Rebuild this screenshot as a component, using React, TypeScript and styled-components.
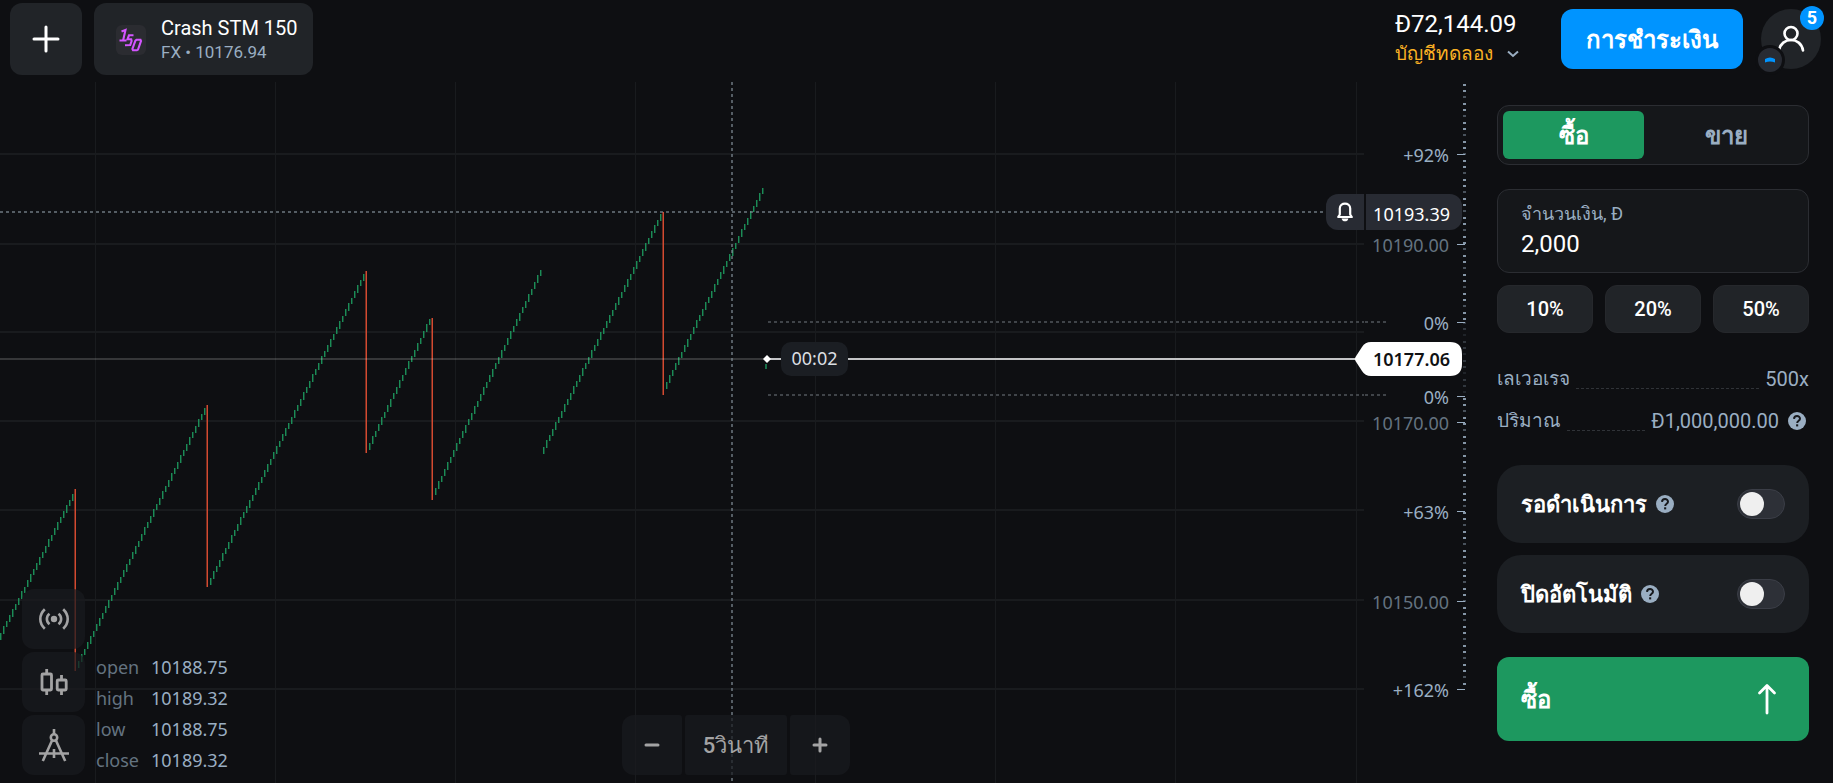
import React, { useState } from 'react';
import styled, { createGlobalStyle } from 'styled-components';

const color = {
  page: '#0e0f12',
  raised: '#212428',
  field: '#15171a',
  card: '#1c1f23',
  line: '#2b2d32',
  grid: '#191b1e',
  muted: '#9aaec2',
  dim: '#647380',
  blue: '#0094ff',
  green: '#1d985f',
  candleUp: '#1d9a5f',
  candleDown: '#d34a30',
  amber: '#fbb124',
};
const uiFont = `Roboto, 'Noto Sans', sans-serif`;
const chartFont = `'Noto Sans', sans-serif`;

const GlobalStyle = createGlobalStyle`
  *, *::before, *::after { box-sizing: border-box; }
  body { margin: 0; background: ${color.page}; color: #fff; font-family: ${uiFont}; }
  button, input { font: inherit; color: inherit; }
  button { border: 0; padding: 0; cursor: pointer; }
  svg { display: block; }
`;

const Page = styled.div`
  min-height: 100vh;
  display: flex;
  flex-direction: column;
  overflow: hidden;
`;

/* ---------- header ---------- */
const Header = styled.header`
  display: flex;
  justify-content: space-between;
  height: 82px;
  padding: 3px 12px 0 10px;
`;
const Tabs = styled.nav`
  display: flex;
  align-items: flex-start;
  gap: 12px;
`;
const AddButton = styled.button`
  display: grid;
  place-items: center;
  width: 72px;
  height: 72px;
  border-radius: 12px;
  background: ${color.raised};
`;
const AssetTab = styled.button`
  display: flex;
  align-items: center;
  gap: 15px;
  height: 72px;
  padding: 2px 15px 0 22px;
  border-radius: 12px;
  background: ${color.raised};
  text-align: left;
`;
const AssetName = styled.span`
  display: block;
  font-size: 20px;
  line-height: 24px;
`;
const AssetQuote = styled.span`
  display: block;
  font-size: 17px;
  line-height: 24px;
  color: ${color.muted};
`;
const Account = styled.div`
  display: flex;
  align-items: flex-start;
  padding-top: 6px;
`;
const BalanceButton = styled.button`
  margin-right: 42px;
  background: none;
  text-align: left;
`;
const Balance = styled.span`
  display: block;
  font-size: 24px;
  line-height: 30px;
`;
const AccountType = styled.span`
  display: flex;
  align-items: center;
  justify-content: space-between;
  gap: 14px;
  font-size: 19px;
  line-height: 30px;
  color: ${color.amber};
`;
const PayButton = styled.button`
  width: 182px;
  height: 60px;
  margin-right: 18px;
  border-radius: 12px;
  background: ${color.blue};
  font-size: 24px;
  font-weight: 700;
`;
const Avatar = styled.button`
  position: relative;
  display: grid;
  place-items: center;
  width: 60px;
  height: 60px;
  border-radius: 50%;
  background: ${color.raised};
`;
const Counter = styled.span`
  position: absolute;
  top: -3px;
  right: -3px;
  width: 24px;
  height: 24px;
  border-radius: 50%;
  background: ${color.blue};
  font-size: 18px;
  font-weight: 700;
  line-height: 24px;
  text-align: center;
`;
const Level = styled.span`
  position: absolute;
  left: -6px;
  bottom: -6px;
  display: grid;
  place-items: center;
  width: 30px;
  height: 30px;
  border: 3px solid ${color.page};
  border-radius: 50%;
  background: #282b33;
`;

/* ---------- chart ---------- */
const Main = styled.main`
  flex: 1;
  display: flex;
`;
const Chart = styled.section`
  position: relative;
  flex: 1;
  display: flex;
  min-width: 0;
  overflow: hidden;
  font-family: ${chartFont};
`;
const Plot = styled.svg`
  flex: 1;
  min-width: 0;
  height: auto;
`;
const Axis = styled.svg`
  width: 109px;
  height: auto;
  font-size: 18px;
`;
const AlertTag = styled.div`
  position: absolute;
  top: 112px;
  right: 11px;
  display: flex;
  gap: 2px;
  font-size: 18px;
  line-height: 36px;
`;
const AlertButton = styled.button`
  display: grid;
  place-items: center;
  width: 38px;
  height: 36px;
  border-radius: 12px 0 0 12px;
  background: #282b33;
`;
const AlertPrice = styled.span`
  width: 96px;
  height: 36px;
  padding-right: 12px;
  padding-top: 2px;
  border-radius: 0 12px 12px 0;
  background: #282b33;
  text-align: right;
`;
const PriceTag = styled.div`
  position: absolute;
  top: 260px;
  right: 11px;
  width: 108px;
  height: 34px;
  padding-right: 12px;
  font-size: 18px;
  font-weight: 600;
  line-height: 34px;
  color: #101114;
  text-align: right;
`;
const PriceShape = styled.svg`
  position: absolute;
  inset: 0;
  z-index: -1;
`;
const PriceTagLayer = styled.div`
  position: absolute;
  inset: 0;
  z-index: 0;
  pointer-events: none;
`;
const Timer = styled.span`
  position: absolute;
  top: 260px;
  left: 781px;
  width: 67px;
  height: 34px;
  border-radius: 10px;
  background: #1b1e23;
  color: #dcdfe2;
  font-size: 18px;
  line-height: 32px;
  text-align: center;
`;
const ChartFooter = styled.div`
  position: absolute;
  left: 22px;
  right: 23px;
  bottom: 8px;
  display: grid;
  grid-template-columns: 1fr auto 1fr;
  align-items: end;
  color: #a3a3a4;
`;
const ToolsArea = styled.div`
  display: flex;
  align-items: flex-end;
  gap: 11px;
`;
const Tools = styled.div`
  display: flex;
  flex-direction: column;
  gap: 3px;
`;
const ToolButton = styled.button`
  display: grid;
  place-items: center;
  width: 63px;
  height: 60px;
  border-radius: 12px;
  background: rgba(25, 27, 30, 0.72);
`;
const Ohlc = styled.dl`
  display: grid;
  grid-template-columns: 55px auto;
  grid-auto-rows: 30px;
  row-gap: 1px;
  margin: 0;
  font-size: 18px;
  line-height: 30px;
`;
const OhlcKey = styled.dt`
  color: ${color.dim};
`;
const OhlcValue = styled.dd`
  margin: 0;
  color: ${color.muted};
`;
const ZoomBar = styled.div`
  display: flex;
  gap: 3px;
  font-family: ${uiFont};
`;
const ZoomButton = styled.button<{ $side: 'left' | 'middle' | 'right' }>`
  display: grid;
  place-items: center;
  width: ${p => (p.$side === 'middle' ? '102px' : '60px')};
  height: 60px;
  border-radius: ${p =>
    p.$side === 'left' ? '12px 3px 3px 12px' : p.$side === 'right' ? '3px 12px 12px 3px' : '3px'};
  background: rgba(25, 27, 30, 0.72);
  font-size: 22px;
  font-weight: 500;
`;

/* ---------- order panel ---------- */
const Panel = styled.form`
  width: 360px;
  padding: 23px 24px 40px;
  display: flex;
  flex-direction: column;
`;
const SideSwitch = styled.div`
  display: grid;
  grid-template-columns: 141px 1fr;
  gap: 6px;
  height: 60px;
  padding: 5px;
  border: 1px solid ${color.line};
  border-radius: 12px;
  background: ${color.field};
`;
const SideButton = styled.button<{ $active: boolean }>`
  border-radius: 6px;
  background: ${p => (p.$active ? color.green : 'transparent')};
  color: ${p => (p.$active ? '#fff' : color.muted)};
  font-size: 24px;
  font-weight: 700;
`;
const Amount = styled.label`
  display: flex;
  flex-direction: column;
  height: 84px;
  margin-top: 24px;
  padding: 10px 23px;
  border: 1px solid ${color.line};
  border-radius: 12px;
  background: ${color.field};
  font-size: 18px;
  line-height: 28px;
  color: ${color.muted};
`;
const AmountInput = styled.input`
  width: 100%;
  height: 32px;
  padding: 0;
  border: 0;
  outline: 0;
  background: none;
  color: #fff;
  font-size: 24px;
  line-height: 32px;
`;
const Chips = styled.div`
  display: grid;
  grid-template-columns: repeat(3, 1fr);
  gap: 12px;
  margin-top: 12px;
`;
const Chip = styled.button`
  height: 48px;
  border: 1px solid #26282c;
  border-radius: 12px;
  background: ${color.raised};
  font-size: 20px;
  font-weight: 500;
`;
const Facts = styled.dl`
  display: flex;
  flex-direction: column;
  gap: 12px;
  margin: 31px 0 0;
  font-size: 19px;
  line-height: 30px;
  color: ${color.muted};
`;
const Fact = styled.div`
  display: flex;
  align-items: center;
`;
const FactName = styled.dt``;
const FactValue = styled.dd`
  display: flex;
  align-items: center;
  gap: 9px;
  margin: 0;
  font-size: 20px;
`;
const Leader = styled.span`
  flex: 1;
  height: 20px;
  margin: 0 6px;
  border-bottom: 1px dashed #303338;
`;
const Cards = styled.div`
  display: flex;
  flex-direction: column;
  gap: 12px;
  margin-top: 29px;
`;
const OptionCard = styled.div`
  display: flex;
  align-items: center;
  gap: 9px;
  height: 78px;
  padding: 0 24px;
  border-radius: 24px;
  background: ${color.card};
  font-size: 22px;
  font-weight: 600;
`;
const HelpButton = styled.button`
  display: block;
  background: none;
`;
const FactHelp = styled(HelpButton)`
  margin-right: 3px;
`;
const Switch = styled.input`
  appearance: none;
  position: relative;
  width: 48px;
  height: 30px;
  margin: 0 0 0 auto;
  border: 1px solid #3b3e47;
  border-radius: 15px;
  background: #2d3037;
  cursor: pointer;
  &::before {
    content: '';
    position: absolute;
    top: 2px;
    left: 2px;
    width: 24px;
    height: 24px;
    border-radius: 50%;
    background: #efefef;
  }
  &:checked { background: ${color.green}; }
  &:checked::before { left: 20px; }
`;
const Submit = styled.button<{ $sell: boolean }>`
  display: flex;
  align-items: center;
  justify-content: space-between;
  height: 84px;
  margin-top: 24px;
  padding: 0 32px 0 24px;
  border-radius: 12px;
  background: ${p => (p.$sell ? color.candleDown : color.green)};
  font-size: 24px;
  font-weight: 700;
`;

/* ---------- icons ---------- */
const AssetIcon = () => (
  <svg width="30" height="30" viewBox="0 0 30 30" fill="none" stroke="#d355ff" strokeWidth="2.100" aria-hidden="true">
    <rect width="30" height="30" rx="6" fill="#2b2c31" stroke="none" />
    <path d="M5.500 6.500 9.500 5 7.200 15M3.500 15.500H10.500" />
    <path d="M17.500 10.300H13L11.500 14.300H15.200L15.600 16 14.200 20 9 20.300" />
    <path d="M20.500 14.800H24.500L25 16 22 24.600 20.800 25.300H17L16.400 24 19.400 15.600Z" />
  </svg>
);
const HelpIcon = () => (
  <svg width="18" height="18" viewBox="0 0 18 18" aria-hidden="true">
    <circle cx="9" cy="9" r="9" fill={color.muted} />
    <path d="M6 6.900C6.100 3.100 12 3.100 12 6.700 12 8.700 9.200 8.700 9.200 10.900" fill="none" stroke="#17191d" strokeWidth="2" />
    <rect x="8.100" y="12.300" width="2.100" height="2.100" fill="#17191d" />
  </svg>
);
const BellIcon = () => (
  <svg width="18" height="20" viewBox="0 0 18 20" fill="none" stroke="#fff" strokeWidth="2.200" strokeLinejoin="round" aria-hidden="true">
    <path d="M3.800 12.500V6.500C3.800 0 14.200 0 14.200 6.500V12.500L15.800 15H2.200Z" />
    <path d="M5.600 16.500C6.200 20.300 11.800 20.300 12.400 16.500Z" fill="#fff" stroke="none" />
  </svg>
);
const UserIcon = () => (
  <svg width="30" height="30" viewBox="0 0 30 30" fill="none" stroke="#fff" strokeWidth="2.600" strokeLinecap="round" aria-hidden="true">
    <circle cx="15" cy="9.500" r="6.500" />
    <path d="M3 26.500C5 12.500 25 12.500 27 26.500" />
  </svg>
);
const SignalIcon = () => (
  <svg width="32" height="24" viewBox="0 0 32 24" fill="none" stroke="currentColor" strokeWidth="2.600" aria-hidden="true">
    <circle cx="16" cy="12" r="3.200" fill="currentColor" stroke="none" />
    <path d="M11.500 6.800C8 9.500 8 14.500 11.500 17.200M20.500 6.800C24 9.500 24 14.500 20.500 17.200M6.800 2.300C.8 8 .8 16 6.800 21.700M25.200 2.300C31.200 8 31.200 16 25.200 21.700" />
  </svg>
);
const CandlesIcon = () => (
  <svg width="30" height="30" viewBox="0 0 30 30" fill="none" stroke="currentColor" strokeWidth="2.800" aria-hidden="true">
    <rect x="3" y="7" width="9.500" height="16" rx="1" />
    <path d="M7.700 2V7M7.700 23V28M22.500 8V13M22.500 23V28" />
    <rect x="18.200" y="13" width="9" height="10" rx="1" />
  </svg>
);
const CompassIcon = () => (
  <svg width="32" height="34" viewBox="0 0 32 34" fill="none" stroke="currentColor" strokeWidth="2.600" aria-hidden="true">
    <path d="M16 1V6M1 25.500H31M16 21V30M14.500 11.500 4.800 33M17.500 11.500 27.200 33" />
    <circle cx="16" cy="9.500" r="3.200" />
  </svg>
);
const PlusIcon = ({ size, stroke }: { size: number; stroke: number }) => (
  <svg width={size} height={size} viewBox={`0 0 ${size} ${size}`} stroke="currentColor" strokeWidth={stroke} strokeLinecap="round" aria-hidden="true">
    <path d={`M${size / 2} 2V${size - 2}M2 ${size / 2}H${size - 2}`} />
  </svg>
);
const MinusIcon = () => (
  <svg width="16" height="16" viewBox="0 0 16 16" stroke="currentColor" strokeWidth="3" strokeLinecap="round" aria-hidden="true">
    <path d="M2 8H14" />
  </svg>
);
const ArrowUpIcon = () => (
  <svg width="20" height="32" viewBox="0 0 20 32" fill="none" stroke="#fff" strokeWidth="2.800" strokeLinecap="round" strokeLinejoin="round" aria-hidden="true">
    <path d="M10 30V3M2.500 10 10 2.500 17.500 10" />
  </svg>
);

/* ---------- chart data ---------- */
// Rising runs: first candle x, its middle y, last candle x, its middle y
const runs = [
  [0, 554, 72, 415],
  [78, 582, 204, 329],
  [210, 499, 363, 195],
  [369, 364, 429, 240],
  [435, 409, 540, 191],
  [543, 368, 660, 135],
  [666, 303, 762, 109],
];
// Crashes: x, top, bottom
const crashes = [
  [75, 407, 589],
  [207, 323, 505],
  [366, 189, 371],
  [432, 236, 418],
  [663, 130, 313],
];
const gridX = [95, 275, 455, 635, 815, 995, 1175, 1356];
const gridY = [72, 162, 250, 339, 428, 518, 607];
const ticks = [
  { y: 72, text: '+92%', price: false },
  { y: 162, text: '10190.00', price: true },
  { y: 240, text: '0%', price: false },
  { y: 314, text: '0%', price: false },
  { y: 340, text: '10170.00', price: true },
  { y: 429, text: '+63%', price: false },
  { y: 519, text: '10150.00', price: true },
  { y: 607, text: '+162%', price: false },
];

const Candles = () => (
  <g>
    {runs.flatMap(([x1, y1, x2, y2]) => {
      const count = (x2 - x1) / 3;
      return Array.from({ length: count + 1 }, (_, i) => {
        const middle = y1 + ((y2 - y1) * i) / count;
        const height = i % 3 === 1 ? 8 : i % 3 === 2 ? 6 : 7;
        const x = x1 + i * 3;
        return (
          <g key={x} fill={color.candleUp}>
            <rect x={x} y={Math.round(middle - height / 2)} width="1" height={height} opacity="0.900" />
            <rect x={x + 1} y={Math.round(middle - height / 2)} width="1" height={height} opacity="0.400" />
          </g>
        );
      });
    })}
    <rect x="765" y="282" width="2" height="5" fill={color.candleUp} opacity="0.700" />
    {crashes.map(([x, top, bottom]) => (
      <g key={x} fill={color.candleDown}>
        <rect x={x} y={top} width="1" height={bottom - top} />
        <rect x={x - 1} y={top} width="1" height={bottom - top} opacity="0.500" />
      </g>
    ))}
  </g>
);

export default function App() {
  const [sell, setSell] = useState(false);
  const [amount, setAmount] = useState('2,000');
  return (
    <Page>
      <GlobalStyle />
      <Header>
        <Tabs>
          <AddButton aria-label="เพิ่ม"><PlusIcon size={28} stroke={3} /></AddButton>
          <AssetTab>
            <AssetIcon />
            <span>
              <AssetName>Crash STM 150</AssetName>
              <AssetQuote>FX • 10176.94</AssetQuote>
            </span>
          </AssetTab>
        </Tabs>
        <Account>
          <BalanceButton>
            <Balance>Đ72,144.09</Balance>
            <AccountType>
              บัญชีทดลอง
              <svg width="12" height="8" viewBox="0 0 12 8" fill="none" stroke={color.muted} strokeWidth="2" aria-hidden="true">
                <path d="M1 1.500 6 6 11 1.500" />
              </svg>
            </AccountType>
          </BalanceButton>
          <PayButton>การชำระเงิน</PayButton>
          <Avatar aria-label="โปรไฟล์">
            <UserIcon />
            <Counter>5</Counter>
            <Level>
              <svg width="12" height="6" viewBox="0 0 12 6" aria-hidden="true">
                <path d="M1 5.500V2Q6-1 11 2V5.500Q6 3.500 1 5.500Z" fill={color.blue} />
              </svg>
            </Level>
          </Avatar>
        </Account>
      </Header>
      <Main>
        <Chart>
          <Plot>
            <g fill={color.grid}>
              {gridX.map(x => <rect key={x} x={x} y="0" width="1" height="100%" />)}
              {gridY.map(y => <rect key={y} x="0" y={y - 1} width="100%" height="2" />)}
            </g>
            <Candles />
            <rect x="0" y="276" width="766" height="2" fill="#fff" opacity="0.170" />
            <line x1="766" y1="277" x2="100%" y2="277" stroke="#c3c4c6" strokeWidth="2" />
            <path d="M767 273 771 277 767 281 763 277Z" fill="#fff" />
            <g stroke="#85919b" strokeWidth="2" strokeDasharray="3 3" opacity="0.600">
              <line x1="0" y1="130" x2="100%" y2="130" />
              <line x1="732" y1="0" x2="732" y2="100%" />
            </g>
            <g stroke="#404449" strokeWidth="2" strokeDasharray="3 3">
              <line x1="768" y1="240" x2="100%" y2="240" />
              <line x1="768" y1="313" x2="100%" y2="313" />
            </g>
          </Plot>
          <Axis>
            <g stroke="#404449" strokeWidth="2" strokeDasharray="3 3">
              <line x1="1" y1="240" x2="22" y2="240" />
              <line x1="1" y1="313" x2="22" y2="313" />
            </g>
            {ticks.map(t => (
              <g key={t.y}>
                <text x="85" y={t.y + 8} textAnchor="end" fill={t.price ? color.dim : color.muted}>{t.text}</text>
                <rect x="93" y={t.y} width="8" height="1" fill={color.muted} />
              </g>
            ))}
            <g stroke={color.muted} strokeWidth="3" strokeDasharray="2 4 2 4.500 1 5.500">
              <line x1="100.500" y1="2" x2="100.500" y2="240" opacity="0.850" />
              <line x1="100.500" y1="240" x2="100.500" y2="314" opacity="0.250" />
              <line x1="100.500" y1="316" x2="100.500" y2="604" opacity="0.850" />
            </g>
          </Axis>
          <Timer>00:02</Timer>
          <AlertTag>
            <AlertButton aria-label="แจ้งเตือน"><BellIcon /></AlertButton>
            <AlertPrice>10193.39</AlertPrice>
          </AlertTag>
          <PriceTagLayer>
            <PriceTag>
              <PriceShape width="108" height="34" viewBox="0 0 108 34" aria-hidden="true">
                <path d="M17 0H96Q108 0 108 12V22Q108 34 96 34H17Q11 34 8 29L1.500 19Q0 17 1.500 15L8 5Q11 0 17 0Z" fill="#fff" />
              </PriceShape>
              10177.06
            </PriceTag>
          </PriceTagLayer>
          <ChartFooter>
            <ToolsArea>
              <Tools>
                <ToolButton aria-label="สัญญาณ"><SignalIcon /></ToolButton>
                <ToolButton aria-label="ประเภทกราฟ"><CandlesIcon /></ToolButton>
                <ToolButton aria-label="เครื่องมือวาด"><CompassIcon /></ToolButton>
              </Tools>
              <Ohlc>
                <OhlcKey>open</OhlcKey><OhlcValue>10188.75</OhlcValue>
                <OhlcKey>high</OhlcKey><OhlcValue>10189.32</OhlcValue>
                <OhlcKey>low</OhlcKey><OhlcValue>10188.75</OhlcValue>
                <OhlcKey>close</OhlcKey><OhlcValue>10189.32</OhlcValue>
              </Ohlc>
            </ToolsArea>
            <ZoomBar>
              <ZoomButton $side="left" aria-label="ย่อ"><MinusIcon /></ZoomButton>
              <ZoomButton $side="middle">5วินาที</ZoomButton>
              <ZoomButton $side="right" aria-label="ขยาย"><PlusIcon size={16} stroke={3} /></ZoomButton>
            </ZoomBar>
          </ChartFooter>
        </Chart>
        <Panel onSubmit={e => e.preventDefault()}>
          <SideSwitch>
            <SideButton type="button" $active={!sell} onClick={() => setSell(false)}>ซื้อ</SideButton>
            <SideButton type="button" $active={sell} onClick={() => setSell(true)}>ขาย</SideButton>
          </SideSwitch>
          <Amount>
            จำนวนเงิน, Đ
            <AmountInput value={amount} onChange={e => setAmount(e.target.value)} />
          </Amount>
          <Chips>
            <Chip type="button">10%</Chip>
            <Chip type="button">20%</Chip>
            <Chip type="button">50%</Chip>
          </Chips>
          <Facts>
            <Fact>
              <FactName>เลเวอเรจ</FactName>
              <Leader />
              <FactValue>500x</FactValue>
            </Fact>
            <Fact>
              <FactName>ปริมาณ</FactName>
              <Leader />
              <FactValue>
                Đ1,000,000.00
                <FactHelp type="button" aria-label="ช่วยเหลือ"><HelpIcon /></FactHelp>
              </FactValue>
            </Fact>
          </Facts>
          <Cards>
            <OptionCard>
              <label htmlFor="pending">รอดำเนินการ</label>
              <HelpButton type="button" aria-label="ช่วยเหลือ"><HelpIcon /></HelpButton>
              <Switch type="checkbox" id="pending" />
            </OptionCard>
            <OptionCard>
              <label htmlFor="autoclose">ปิดอัตโนมัติ</label>
              <HelpButton type="button" aria-label="ช่วยเหลือ"><HelpIcon /></HelpButton>
              <Switch type="checkbox" id="autoclose" />
            </OptionCard>
          </Cards>
          <Submit type="submit" $sell={sell}>
            {sell ? 'ขาย' : 'ซื้อ'}
            <ArrowUpIcon />
          </Submit>
        </Panel>
      </Main>
    </Page>
  );
}
